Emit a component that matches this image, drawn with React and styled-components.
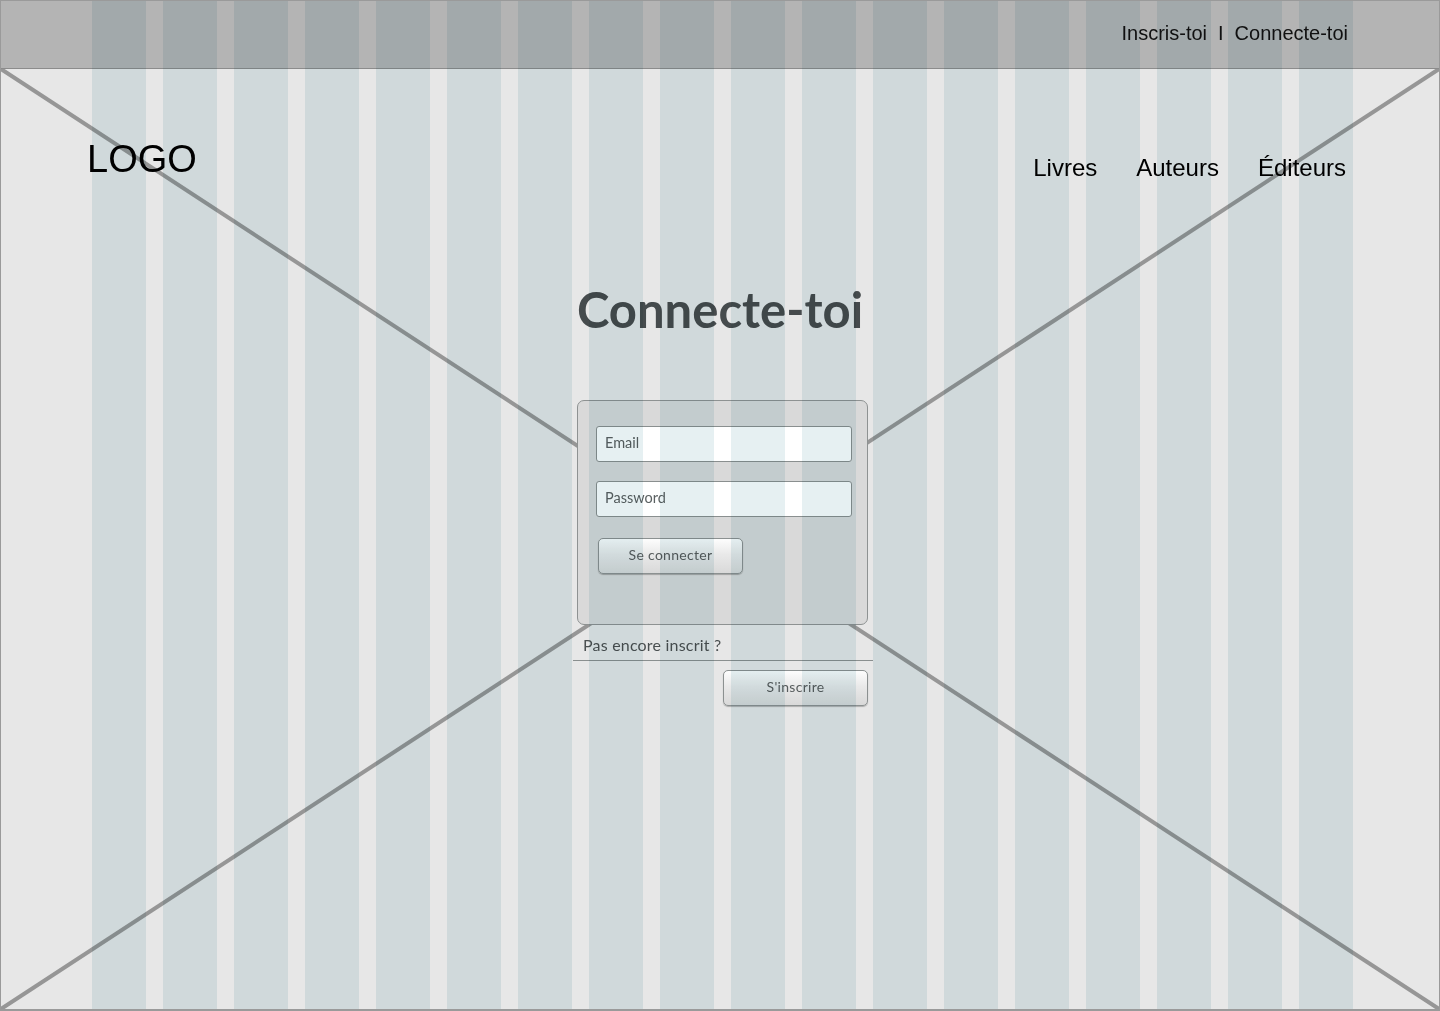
import React from "react";
import styled, { createGlobalStyle } from "styled-components";

const Global = createGlobalStyle`
  html, body { margin: 0; padding: 0; background: #e7e7e7; }
  * { box-sizing: border-box; }
`;

const Page = styled.div`
  position: relative;
  width: 1440px;
  height: 1011px;
  border: 1px solid #9a9a9a;
  border-bottom-width: 2px;
  background: #e7e7e7;
  overflow: hidden;
  display: flex;
  flex-direction: column;
`;

const TopBar = styled.header`
  position: relative;
  z-index: 1;
  flex-shrink: 0;
  height: 68px;
  background: #b4b4b4;
  border-bottom: 1px solid #8c8c8c;
  display: flex;
  align-items: center;
  justify-content: flex-end;
  gap: 11px;
  padding: 0 91px 2px 0;
  font-family: "Liberation Sans", Arial, sans-serif;
  font-size: 20px;
  color: #111;
`;

const TopLink = styled.a`
  color: inherit;
  text-decoration: none;
`;

const Body = styled.main`
  position: relative;
  flex: 1;
`;

const Cross = styled.svg`
  position: absolute;
  inset: 0;
  width: 100%;
  height: 100%;
  z-index: 0;
`;

const Content = styled.div`
  position: relative;
  z-index: 1;
  display: flex;
  flex-direction: column;
  align-items: center;
`;

const NavRow = styled.div`
  align-self: stretch;
  display: flex;
  justify-content: space-between;
  align-items: flex-start;
  padding: 71px 93px 0 86px;
  font-family: "Liberation Sans", Arial, sans-serif;
  color: #000;
`;

const Logo = styled.div`
  font-size: 38px;
  line-height: 1;
`;

const Nav = styled.nav`
  display: flex;
  gap: 39px;
  margin-top: 16px;
  font-size: 24px;
  line-height: 1;
`;

const NavLink = styled.a`
  color: inherit;
  text-decoration: none;
`;

const Title = styled.h1`
  margin: 105px 0 0;
  font-family: Lato, "Open Sans", sans-serif;
  font-weight: 700;
  font-size: 49px;
  line-height: 1;
  color: #464b4d;
`;

const FormColumn = styled.div`
  width: 300px;
  margin: 66px 0 0 6px;
  display: flex;
  flex-direction: column;
  font-family: Lato, "Open Sans", sans-serif;
`;

const Panel = styled.form`
  margin: 0 5px 0 4px;
  height: 225px;
  background: #d9d9d9;
  border: 1px solid #8e9292;
  border-radius: 7px;
  padding: 25px 15px 0 18px;
  display: flex;
  flex-direction: column;
  align-items: flex-start;
`;

const Field = styled.input`
  width: 256px;
  height: 36px;
  margin-bottom: ${(p) => p.$gap}px;
  background: #fff;
  border: 1px solid #8a8f8f;
  border-radius: 3px;
  padding: 0 8px 3px;
  font-family: Lato, "Open Sans", sans-serif;
  font-size: 14.5px;
  color: #525859;
  outline: none;
  &::placeholder {
    color: #5a6061;
  }
`;

const Button = styled.button`
  width: 145px;
  height: 36px;
  margin-left: ${(p) => p.$offset || 0}px;
  border: 1px solid #8c9191;
  border-radius: 5px;
  background: linear-gradient(#fdfdfd, #e9e9e9 45%, #d9d9d9);
  box-shadow: 0 1px 1px rgba(0, 0, 0, 0.25);
  font-family: Lato, "Open Sans", sans-serif;
  font-size: 14px;
  letter-spacing: 0.3px;
  color: #575c5d;
  padding: 0 0 3px;
  cursor: pointer;
`;

const Question = styled.div`
  padding: 10px 0 5px 10px;
  border-bottom: 1px solid #8a8f8f;
  font-size: 16px;
  letter-spacing: 0.2px;
  line-height: 20px;
  color: #4b5051;
`;

const SignupRow = styled.div`
  display: flex;
  justify-content: flex-end;
  padding: 9px 5px 0 0;
`;

const GridOverlay = styled.div`
  position: absolute;
  top: 0;
  bottom: 0;
  left: 91px;
  z-index: 5;
  display: grid;
  grid-template-columns: repeat(18, 54px);
  column-gap: 17px;
  pointer-events: none;
  mix-blend-mode: multiply;
`;

const GridCol = styled.div`
  background: rgb(230, 240, 242);
`;

export default function App() {
  return (
    <>
      <Global />
      <Page>
        <TopBar>
          <TopLink href="#">Inscris-toi</TopLink>
          <span>I</span>
          <TopLink href="#">Connecte-toi</TopLink>
        </TopBar>
        <Body>
          <Cross viewBox="0 0 1438 940" preserveAspectRatio="none">
            <line x1="0" y1="0" x2="1438" y2="940" stroke="#969696" strokeWidth="4" />
            <line x1="1438" y1="0" x2="0" y2="940" stroke="#969696" strokeWidth="4" />
          </Cross>
          <Content>
            <NavRow>
              <Logo>LOGO</Logo>
              <Nav>
                <NavLink href="#">Livres</NavLink>
                <NavLink href="#">Auteurs</NavLink>
                <NavLink href="#">Éditeurs</NavLink>
              </Nav>
            </NavRow>
            <Title>Connecte-toi</Title>
            <FormColumn>
              <Panel onSubmit={(e) => e.preventDefault()}>
                <Field $gap={19} type="email" placeholder="Email" />
                <Field $gap={21} type="password" placeholder="Password" />
                <Button $offset={2} type="submit">Se connecter</Button>
              </Panel>
              <Question>Pas encore inscrit ?</Question>
              <SignupRow>
                <Button type="button">S'inscrire</Button>
              </SignupRow>
            </FormColumn>
          </Content>
        </Body>
        <GridOverlay>
          {Array.from({ length: 18 }, (_, i) => (
            <GridCol key={i} />
          ))}
        </GridOverlay>
      </Page>
    </>
  );
}
